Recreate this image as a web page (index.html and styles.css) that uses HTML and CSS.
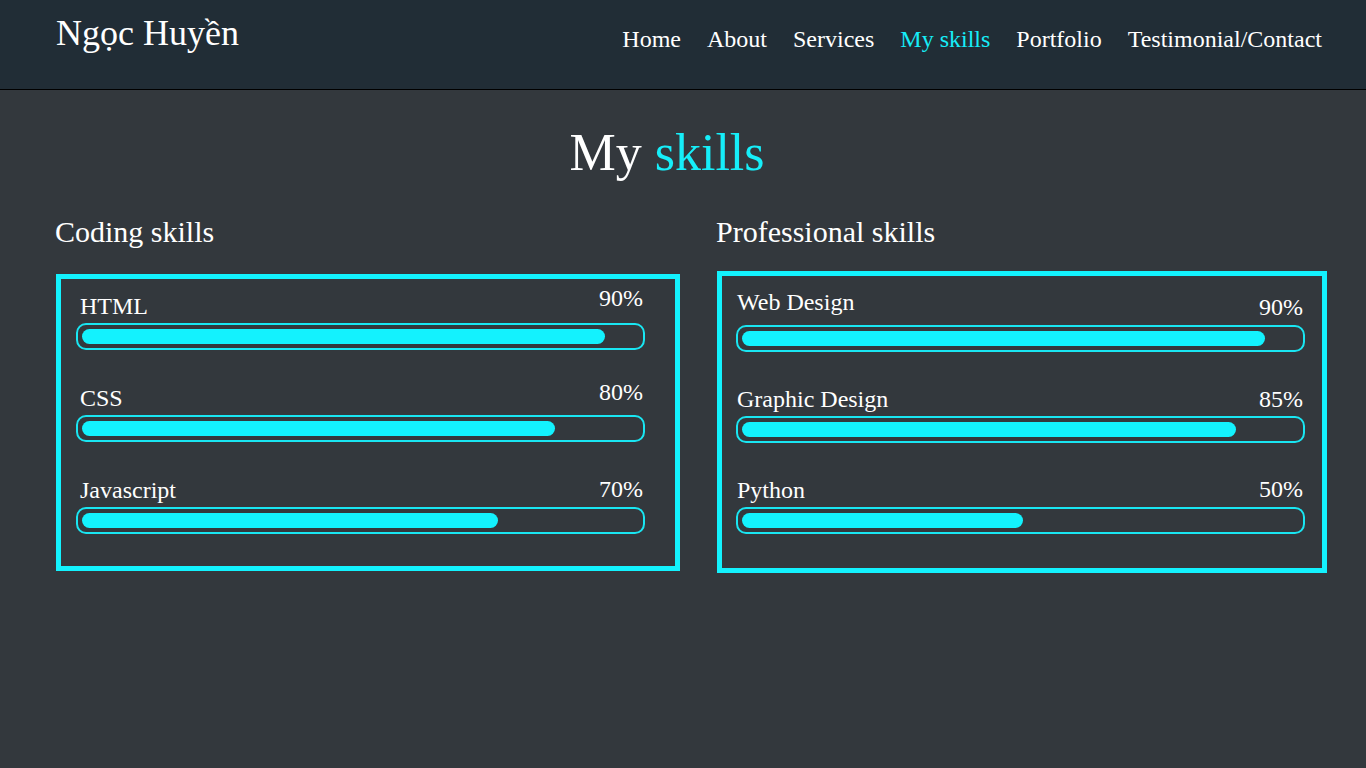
FILE: index.html
```html
<!DOCTYPE html>
<html lang="vi">
<head>
<meta charset="utf-8">
<title>Ngọc Huyền - My skills</title>
<link rel="stylesheet" href="styles.css">
</head>
<body>
<header class="site-header">
  <a class="logo" href="#">Ngọc Huyền</a>
  <nav class="main-nav">
    <a class="nav-link" href="#">Home</a>
    <a class="nav-link" href="#">About</a>
    <a class="nav-link" href="#">Services</a>
    <a class="nav-link is-active" href="#">My skills</a>
    <a class="nav-link" href="#">Portfolio</a>
    <a class="nav-link" href="#">Testimonial/Contact</a>
  </nav>
</header>
<main class="skills">
  <h1 class="skills-title">My <span class="accent">skills</span></h1>
  <div class="skills-grid">
    <section class="skill-col">
      <h2 class="col-title">Coding skills</h2>
      <div class="skill-card skill-card--coding">
        <div class="skill">
          <div class="skill-head"><span class="skill-name">HTML</span><span class="skill-pct up-8">90%</span></div>
          <div class="track"><div class="fill" style="width:93.9%"></div></div>
        </div>
        <div class="skill">
          <div class="skill-head"><span class="skill-name">CSS</span><span class="skill-pct up-6">80%</span></div>
          <div class="track"><div class="fill" style="width:85%"></div></div>
        </div>
        <div class="skill">
          <div class="skill-head"><span class="skill-name">Javascript</span><span class="skill-pct up-1">70%</span></div>
          <div class="track"><div class="fill" style="width:74.6%"></div></div>
        </div>
      </div>
    </section>
    <section class="skill-col">
      <h2 class="col-title">Professional skills</h2>
      <div class="skill-card skill-card--pro">
        <div class="skill">
          <div class="skill-head"><span class="skill-name up-6">Web Design</span><span class="skill-pct up-1">90%</span></div>
          <div class="track"><div class="fill" style="width:93.9%"></div></div>
        </div>
        <div class="skill">
          <div class="skill-head"><span class="skill-name">Graphic Design</span><span class="skill-pct">85%</span></div>
          <div class="track"><div class="fill" style="width:88.7%"></div></div>
        </div>
        <div class="skill">
          <div class="skill-head"><span class="skill-name">Python</span><span class="skill-pct up-1">50%</span></div>
          <div class="track"><div class="fill" style="width:50.4%"></div></div>
        </div>
      </div>
    </section>
  </div>
</main>
</body>
</html>
```
FILE: styles.css
```css
* { box-sizing: border-box; }

html, body {
  margin: 0;
  padding: 0;
}

body {
  background: #33383d;
  color: #ffffff;
  font-family: "Liberation Serif", "Times New Roman", serif;
  min-height: 768px;
}

.site-header {
  display: flex;
  align-items: flex-start;
  justify-content: space-between;
  height: 90px;
  padding: 12px 44px 0 56px;
  background: #212d36;
  border-bottom: 1px solid #000000;
}

.logo {
  font-size: 36px;
  line-height: 1.2;
  color: #ffffff;
  text-decoration: none;
}

.main-nav {
  display: flex;
  align-items: baseline;
  gap: 26px;
  margin-top: 13px;
}

.nav-link {
  font-size: 24px;
  line-height: 1.2;
  color: #ffffff;
  text-decoration: none;
}

.nav-link.is-active {
  color: #16eef9;
}

.skills {
  padding: 0 0 40px 56px;
}

.skills-title {
  margin: 32px 0 0 0;
  padding-right: 88px;
  text-align: center;
  font-size: 52px;
  font-weight: normal;
  line-height: 1.2;
}

.accent {
  color: #16eef9;
}

.skills-grid {
  display: grid;
  grid-template-columns: 624px 610px;
  column-gap: 37px;
  margin-top: 30px;
  align-items: start;
}

.col-title {
  margin: 0 0 0 -1px;
  font-size: 30px;
  font-weight: normal;
  line-height: 1.2;
}

.skill-card {
  border: 5px solid #13f2fe;
  display: flex;
  flex-direction: column;
}

.skill-card--coding {
  margin-top: 24px;
  padding: 15px 0 32px 15px;
  gap: 36px;
}

.skill-card--pro {
  margin-top: 21px;
  padding: 20px 0 34px 14px;
  gap: 35px;
}

.skill {
  width: 569px;
}

.skill-head {
  display: flex;
  justify-content: space-between;
  align-items: flex-end;
  height: 24px;
  margin-bottom: 5px;
  font-size: 24px;
  line-height: 1;
  padding: 0 2px 0 4px;
}

.skill-card--pro .skill-head {
  padding-left: 1px;
}

.skill-name,
.skill-pct {
  white-space: nowrap;
}

.up-1 { margin-bottom: 1px; }
.up-6 { margin-bottom: 6px; }
.up-8 { margin-bottom: 8px; }

.track {
  height: 27px;
  border: 2px solid #19e6f2;
  border-radius: 10px;
  padding: 4px;
}

.fill {
  height: 15px;
  background: #13f2fe;
  border-radius: 8px;
}
```
